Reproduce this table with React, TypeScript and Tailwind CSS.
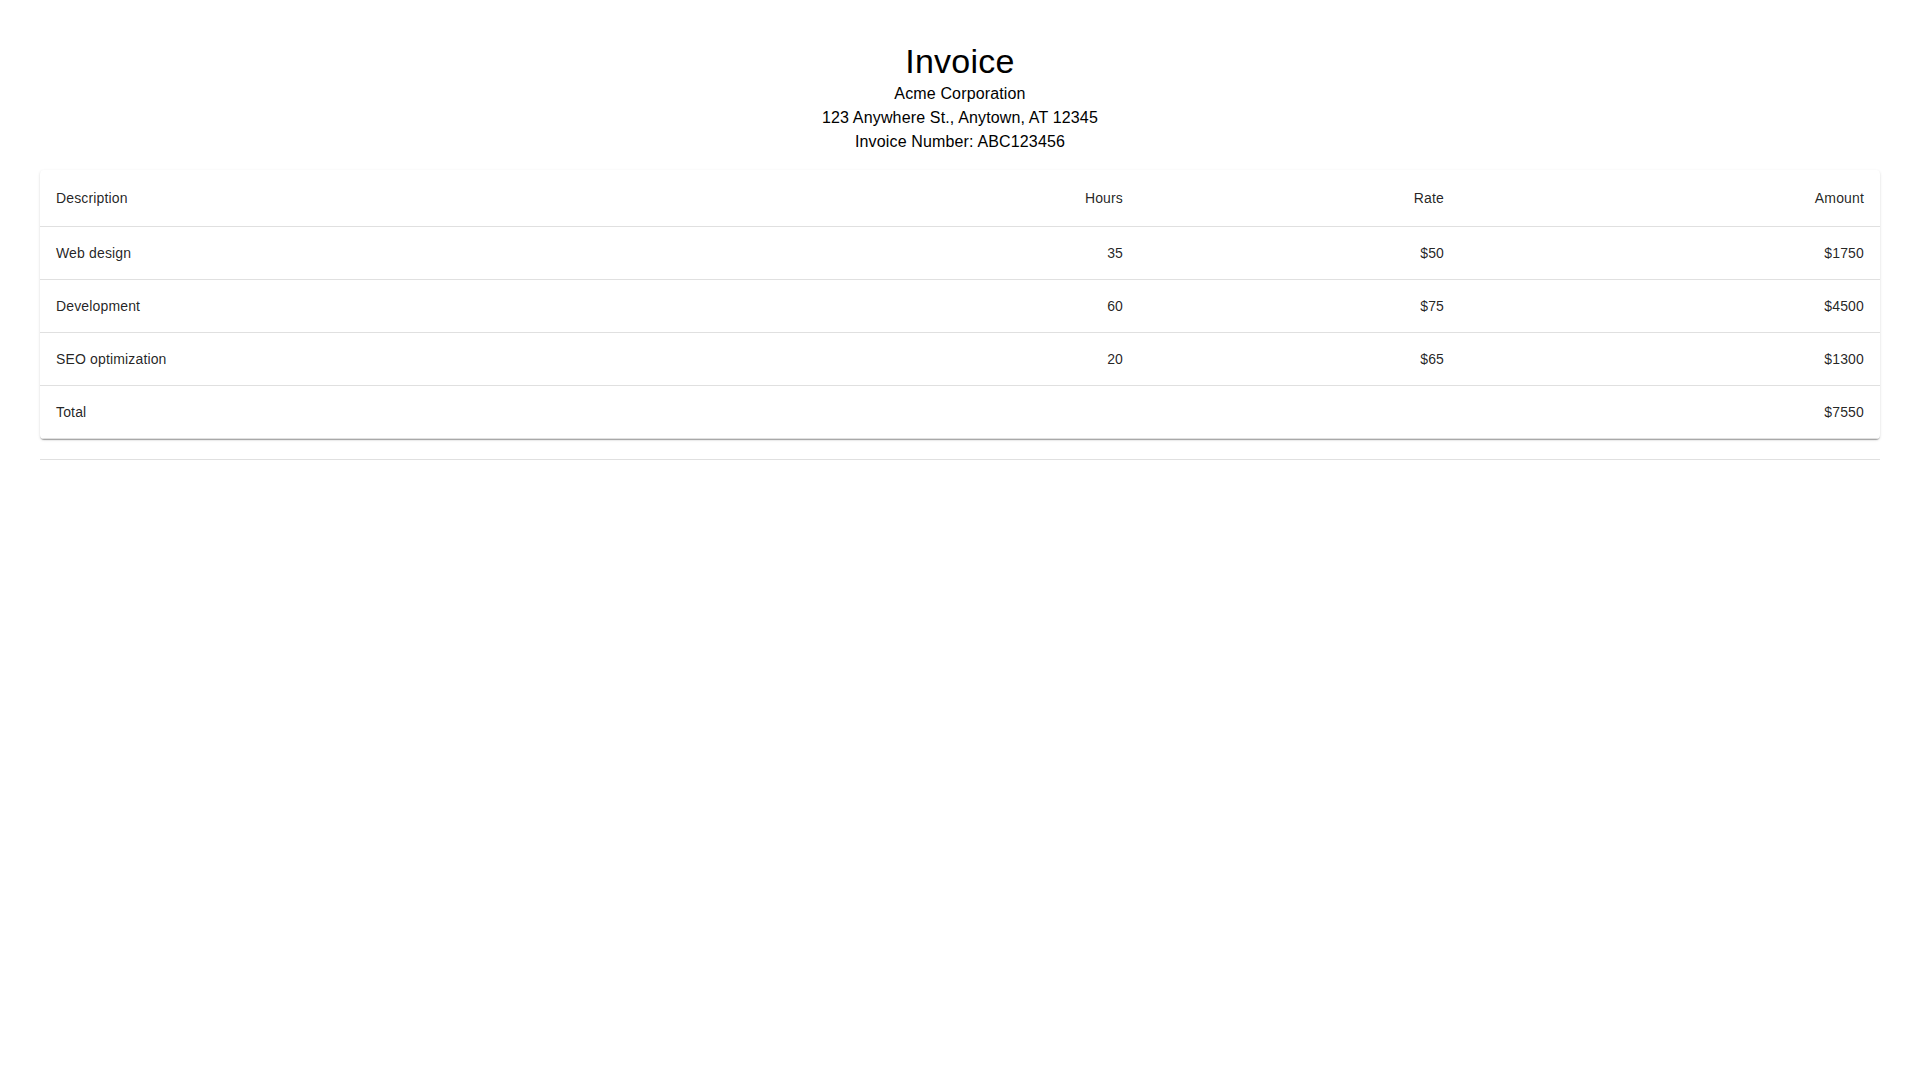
const rows = [
  { description: "Web design", hours: 35, rate: 50 },
  { description: "Development", hours: 60, rate: 75 },
  { description: "SEO optimization", hours: 20, rate: 65 },
];

const headCell =
  "p-4 text-sm leading-6 font-normal tracking-[0.01071em] text-black/[0.87] border-b border-[#e0e0e0]";
const bodyCell =
  "p-4 text-sm leading-[20.02px] tracking-[0.01071em] text-black/[0.87] border-b border-[#e0e0e0]";

export default function App() {
  const total = rows.reduce((sum, row) => sum + row.hours * row.rate, 0);

  return (
    <div className="min-h-screen bg-white px-10 py-10 font-['Liberation_Sans',Arial,sans-serif]">
      {/* header */}
      <div className="flex flex-col items-center mb-4">
        <h4 className="text-[34px] leading-[42px] tracking-[0.00735em] text-black">
          Invoice
        </h4>
        <p className="text-base leading-6 tracking-[0.00938em] text-black">
          Acme Corporation
        </p>
        <p className="text-base leading-6 tracking-[0.00938em] text-black">
          123 Anywhere St., Anytown, AT 12345
        </p>
        <p className="text-base leading-6 tracking-[0.00938em] text-black">
          Invoice Number: ABC123456
        </p>
      </div>

      {/* table */}
      <div className="bg-white rounded overflow-hidden shadow-[0px_2px_1px_-1px_rgba(0,0,0,0.2),0px_1px_1px_0px_rgba(0,0,0,0.14),0px_1px_3px_0px_rgba(0,0,0,0.12)]">
        <table className="w-full border-collapse">
          <thead>
            <tr>
              <th className={`${headCell} text-left`}>Description</th>
              <th className={`${headCell} text-right w-[300px]`}>Hours</th>
              <th className={`${headCell} text-right w-[321px]`}>Rate</th>
              <th className={`${headCell} text-right w-[420px]`}>Amount</th>
            </tr>
          </thead>
          <tbody>
            {rows.map((row) => (
              <tr key={row.description}>
                <td className={`${bodyCell} text-left`}>{row.description}</td>
                <td className={`${bodyCell} text-right`}>{row.hours}</td>
                <td className={`${bodyCell} text-right`}>${row.rate}</td>
                <td className={`${bodyCell} text-right`}>
                  ${row.hours * row.rate}
                </td>
              </tr>
            ))}
            <tr>
              <td className={`${bodyCell} text-left`}>Total</td>
              <td className={bodyCell}></td>
              <td className={bodyCell}></td>
              <td className={`${bodyCell} text-right`}>${total}</td>
            </tr>
          </tbody>
        </table>
      </div>

      <hr className="mt-5 border-0 border-t border-black/[0.12]" />
    </div>
  );
}
